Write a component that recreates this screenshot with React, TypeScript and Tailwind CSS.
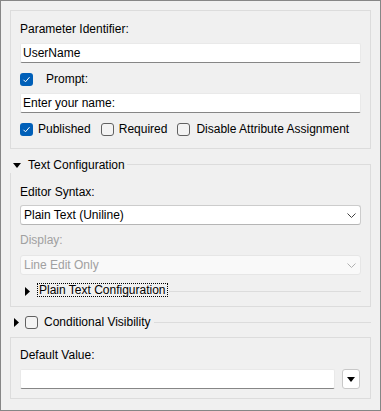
import React from 'react'

const font = { fontFamily: '"Liberation Sans", Arial, sans-serif' }

function CheckBox({ checked }: { checked?: boolean }) {
  if (checked) {
    return (
      <span className="flex h-[13px] w-[13px] shrink-0 items-center justify-center rounded-[3px] bg-[#005fb8]">
        <svg width="9" height="9" viewBox="0 0 9 9" fill="none">
          <path d="M1.5 4.8 L3.5 6.8 L7.5 2.2" stroke="#ffffff" strokeWidth="1" />
        </svg>
      </span>
    )
  }
  return <span className="block h-[13px] w-[13px] shrink-0 rounded-[3px] border border-[#616161] bg-[#f3f3f3]" />
}

function TextInput({ value }: { value: string }) {
  return (
    <div className="flex h-[20px] items-center rounded-[2px] border border-[#e9e9e9] border-b-[#868686] bg-white pl-[2px] text-[12px] leading-[16px] text-black">
      {value}
    </div>
  )
}

function Chevron({ color }: { color: string }) {
  return (
    <svg width="9" height="5" viewBox="0 0 9 5" fill="none">
      <path d="M0.5 0.5 L4.5 4.5 L8.5 0.5" stroke={color} strokeWidth="1" />
    </svg>
  )
}

function Combo({ value, disabled }: { value: string; disabled?: boolean }) {
  return (
    <div
      className={
        disabled
          ? 'flex h-[20px] items-center justify-between rounded-[3px] border border-[#e6e6e6] bg-[#f9f9f9] pl-[3px] pr-[4px] text-[12px] leading-[16px] text-[#a0a0a0]'
          : 'flex h-[20px] items-center justify-between rounded-[3px] border border-[#cccccc] border-b-[#b5b5b5] bg-white pl-[3px] pr-[4px] text-[12px] leading-[16px] text-black'
      }
    >
      <span>{value}</span>
      <Chevron color={disabled ? '#b0b0b0' : '#404040'} />
    </div>
  )
}

function TriDown() {
  return (
    <svg width="8" height="5" viewBox="0 0 8 5">
      <path d="M0 0 L8 0 L4 5 Z" fill="#000" />
    </svg>
  )
}

function TriRight() {
  return (
    <svg width="5" height="9" viewBox="0 0 5 9">
      <path d="M0 0 L5 4.5 L0 9 Z" fill="#000" />
    </svg>
  )
}

export default function App() {
  return (
    <div
      className="flex h-[411px] w-[381px] flex-col border border-[#868686] bg-[#f0f0f0] pl-[9px] pt-[9px] text-[12px] leading-[16px] text-black"
      style={font}
    >
      {/* Paramètres généraux */}
      <div className="flex w-[361px] flex-col border border-[#dcdcdc] px-[9px] pb-[11px] pt-[10px]">
        <div className="h-[16px]">Parameter Identifier:</div>
        <div className="mt-[6px]">
          <TextInput value="UserName" />
        </div>
        <div className="mt-[8px] flex h-[16px] items-center">
          <CheckBox checked />
          <span className="ml-[13px]">Prompt:</span>
        </div>
        <div className="mt-[6px]">
          <TextInput value="Enter your name:" />
        </div>
        <div className="mt-[8px] flex h-[16px] items-center">
          <CheckBox checked />
          <span className="ml-[5px]">Published</span>
          <div className="ml-[10px] flex items-center">
            <CheckBox />
          </div>
          <span className="ml-[5px]">Required</span>
          <div className="ml-[10px] flex items-center">
            <CheckBox />
          </div>
          <span className="ml-[6px]">Disable Attribute Assignment</span>
        </div>
      </div>

      {/* Text Configuration */}
      <div className="mt-[8px] flex h-[16px] w-[361px]">
        <div className="ml-[3px] flex h-[16px] items-center">
          <TriDown />
        </div>
        <span className="ml-[7px]">Text Configuration</span>
        <div className="ml-[2px] mt-[7px] flex-1 border-r border-t border-[#dcdcdc]" />
      </div>
      <div className="flex w-[361px] flex-col border-x border-b border-[#dcdcdc] px-[9px] pb-[7px] pt-[11px]">
        <div className="h-[16px]">Editor Syntax:</div>
        <div className="mt-[5px]">
          <Combo value="Plain Text (Uniline)" />
        </div>
        <div className="mt-[7px] h-[16px] text-[#a0a0a0]">Display:</div>
        <div className="mt-[7px]">
          <Combo value="Line Edit Only" disabled />
        </div>
        <div className="mt-[8px] flex h-[16px]">
          <div className="ml-[5px] flex h-[16px] items-center">
            <TriRight />
          </div>
          <span className="ml-[7px] flex h-[14px] items-center border border-dotted border-black px-[1px]">
            Plain Text Configuration
          </span>
          <div className="ml-px mt-[8px] flex-1 border-t border-[#dcdcdc]" />
        </div>
      </div>

      {/* Conditional Visibility */}
      <div className="mt-[7px] flex h-[16px] w-[361px]">
        <div className="ml-[4px] flex h-[16px] items-center">
          <TriRight />
        </div>
        <div className="ml-[6px] flex h-[16px] items-center">
          <CheckBox />
        </div>
        <span className="ml-[6px]">Conditional Visibility</span>
        <div className="ml-[3px] mt-[8px] flex-1 border-t border-[#dcdcdc]" />
      </div>

      {/* Default Value */}
      <div className="mt-[7px] flex w-[361px] flex-col border border-[#dcdcdc] px-[9px] pb-[9px] pt-[9px]">
        <div className="h-[16px]">Default Value:</div>
        <div className="mt-[6px] flex items-center">
          <div className="w-[315px]">
            <TextInput value="" />
          </div>
          <button className="ml-[7px] flex h-[20px] w-[18px] items-center justify-center rounded-[3px] border border-[#c8c8c8] bg-white">
            <TriDown />
          </button>
        </div>
      </div>
    </div>
  )
}
